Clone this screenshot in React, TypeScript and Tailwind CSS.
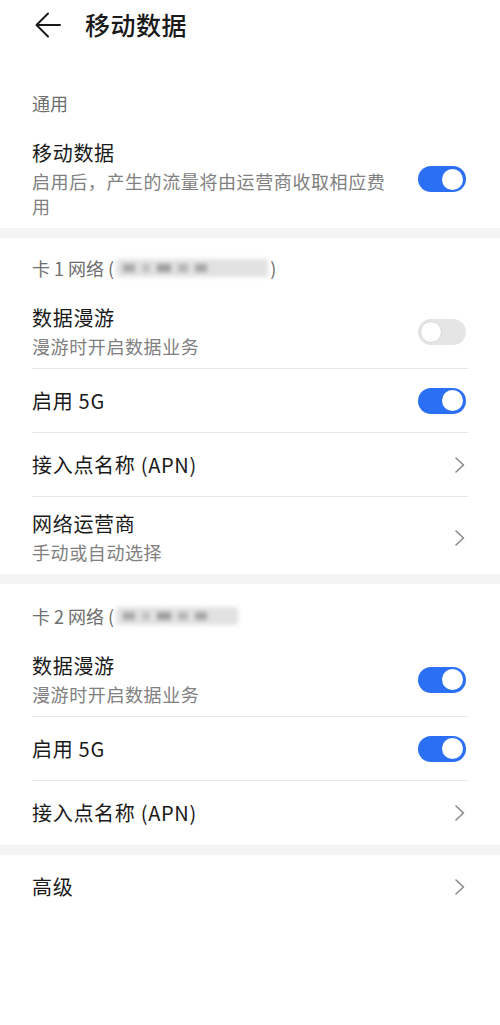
import React from "react";

const font = { fontFamily: '"Noto Sans CJK SC", "Noto Sans", sans-serif' };

function Toggle({ on }: { on: boolean }) {
  return on ? (
    <div className="w-[48px] h-[26px] rounded-full bg-[#2b6ff5] flex items-center justify-end px-[3px] shrink-0">
      <div className="w-[21px] h-[21px] rounded-full bg-white" />
    </div>
  ) : (
    <div className="w-[48px] h-[26px] rounded-full bg-[#e5e5e5] flex items-center justify-start px-[2px] shrink-0">
      <div className="w-[22px] h-[22px] rounded-full bg-white border border-[#d6d6d6]" />
    </div>
  );
}

function Chevron() {
  return (
    <svg width="12" height="18" viewBox="0 0 12 18" className="shrink-0 mr-[0px]">
      <path d="M2 2 L9.5 9 L2 16" fill="none" stroke="#8a8a8a" strokeWidth="1.6" strokeLinecap="round" strokeLinejoin="round" />
    </svg>
  );
}

function Row({
  title,
  sub,
  right,
  divider,
}: {
  title: string;
  sub?: string[];
  right: React.ReactNode;
  divider?: boolean;
}) {
  return (
    <div className="px-[32px]">
      <div
        className={`flex items-center justify-between ${sub ? "pt-[13px] pb-[9px]" : "h-[64px]"} ${
          divider ? "border-b border-[#e8e8e8]" : ""
        }`}
      >
        <div className="flex flex-col pr-6">
          <div className="text-[20px] leading-[28px] text-[#1a1a1a] tracking-[0.7px]">{title}</div>
          {sub && (
            <div className="mt-[2px] text-[18px] leading-[25px] text-[#808080] tracking-[0.6px]">
              {sub.map((s, i) => (
                <div key={i}>{s}</div>
              ))}
            </div>
          )}
        </div>
        <div className="mr-[2px] flex items-center">{right}</div>
      </div>
    </div>
  );
}

function Blur({ w }: { w: number }) {
  return (
    <span className="inline-flex items-center align-middle mx-[2px] blur-[2px]" style={{ width: w }}>
      <span className="h-[18px] w-full rounded-[3px] bg-[#e2e2e2] flex items-center gap-[7px] px-[7px]">
        <span className="h-[8px] w-[12px] bg-[#a8a8a8]" />
        <span className="h-[8px] w-[8px] bg-[#c2c2c2]" />
        <span className="h-[8px] w-[14px] bg-[#9e9e9e]" />
        <span className="h-[8px] w-[10px] bg-[#b5b5b5]" />
        <span className="h-[8px] w-[12px] bg-[#a6a6a6]" />
      </span>
    </span>
  );
}

function SectionHeader({ children, pt }: { children: React.ReactNode; pt: string }) {
  return (
    <div className={`px-[32px] ${pt} pb-[11px] text-[18px] leading-[24px] text-[#6e6e6e] flex items-center`}>
      {children}
    </div>
  );
}

function Band() {
  return <div className="h-[10px] bg-[#f4f4f4]" />;
}

export default function App() {
  return (
    <div className="w-[500px] min-h-[1025px] bg-white" style={font}>
      <div className="h-[50px] flex items-center">
        <svg width="30" height="30" viewBox="0 0 30 30" className="ml-[33px]">
          <path d="M27 15 H4 M15 3.5 L3.5 15 L15 26.5" fill="none" stroke="#1a1a1a" strokeWidth="2" strokeLinecap="round" strokeLinejoin="round" />
        </svg>
        <div className="ml-[22px] text-[25px] font-medium text-[#1a1a1a] tracking-[0.5px]">移动数据</div>
      </div>

      <SectionHeader pt="pt-[41px]">通用</SectionHeader>
      <Row title="移动数据" sub={["启用后，产生的流量将由运营商收取相应费", "用"]} right={<Toggle on />} />
      <Band />

      <SectionHeader pt="pt-[18px]">
        <span>卡 1 网络 (</span>
        <Blur w={152} />
        <span>)</span>
      </SectionHeader>
      <Row title="数据漫游" sub={["漫游时开启数据业务"]} right={<Toggle on={false} />} divider />
      <Row title="启用 5G" right={<Toggle on />} divider />
      <Row title="接入点名称 (APN)" right={<Chevron />} divider />
      <Row title="网络运营商" sub={["手动或自动选择"]} right={<Chevron />} />
      <Band />

      <SectionHeader pt="pt-[20px]">
        <span>卡 2 网络 (</span>
        <Blur w={122} />
      </SectionHeader>
      <Row title="数据漫游" sub={["漫游时开启数据业务"]} right={<Toggle on />} divider />
      <Row title="启用 5G" right={<Toggle on />} divider />
      <Row title="接入点名称 (APN)" right={<Chevron />} />
      <Band />

      <Row title="高级" right={<Chevron />} />
    </div>
  );
}
